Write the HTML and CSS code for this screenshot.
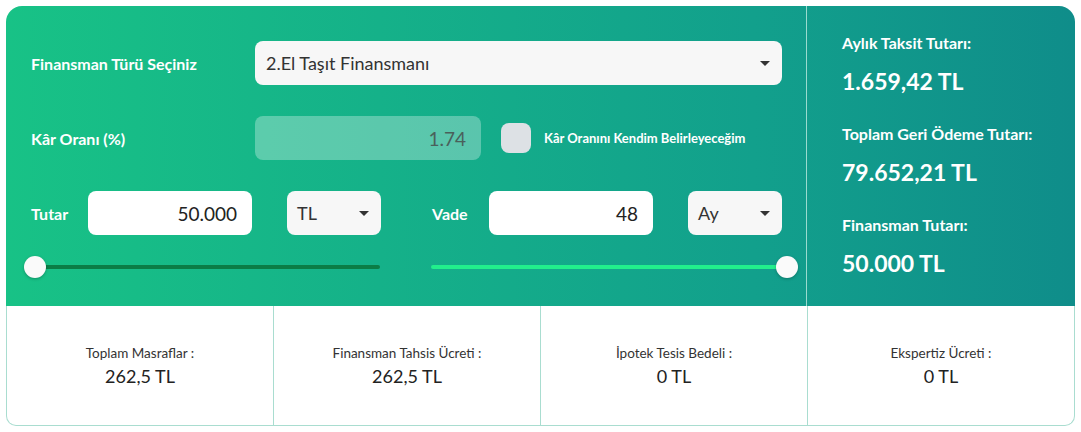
FILE: index.html
```html
<!DOCTYPE html>
<html lang="tr">
<head>
<meta charset="utf-8">
<title>Finansman Hesaplama</title>
<link rel="stylesheet" href="styles.css">
</head>
<body>
<div class="card">
  <div class="top">
    <div class="form">
      <div class="row">
        <div class="label wide">Finansman Türü Seçiniz</div>
        <div class="select big">
          <span>2.El Taşıt Finansmanı</span>
          <span class="caret"></span>
        </div>
      </div>
      <div class="row">
        <div class="label wide">Kâr Oranı (%)</div>
        <div class="input disabled">1.74</div>
        <div class="check"></div>
        <div class="check-label">Kâr Oranını Kendim Belirleyeceğim</div>
      </div>
      <div class="row halves">
        <div class="half">
          <div class="label short">Tutar</div>
          <div class="input white">50.000</div>
          <div class="select small"><span>TL</span><span class="caret"></span></div>
        </div>
        <div class="half">
          <div class="label short">Vade</div>
          <div class="input white">48</div>
          <div class="select small"><span>Ay</span><span class="caret"></span></div>
        </div>
      </div>
      <div class="sliders">
        <div class="slider left">
          <div class="track dark"></div>
          <div class="thumb start"></div>
        </div>
        <div class="slider right">
          <div class="track bright"></div>
          <div class="thumb end"></div>
        </div>
      </div>
    </div>
    <div class="results">
      <div class="r-label">Aylık Taksit Tutarı:</div>
      <div class="r-value">1.659,42 TL</div>
      <div class="r-label">Toplam Geri Ödeme Tutarı:</div>
      <div class="r-value">79.652,21 TL</div>
      <div class="r-label">Finansman Tutarı:</div>
      <div class="r-value">50.000 TL</div>
    </div>
  </div>
  <div class="bottom">
    <div class="cell"><div class="c-label">Toplam Masraflar :</div><div class="c-value">262,5 TL</div></div>
    <div class="cell"><div class="c-label">Finansman Tahsis Ücreti :</div><div class="c-value">262,5 TL</div></div>
    <div class="cell"><div class="c-label">İpotek Tesis Bedeli :</div><div class="c-value">0 TL</div></div>
    <div class="cell"><div class="c-label">Ekspertiz Ücreti :</div><div class="c-value">0 TL</div></div>
  </div>
</div>
</body>
</html>
```
FILE: styles.css
```css
* { box-sizing: border-box; }
html, body { margin: 0; background: #fff; }
body {
  padding: 6px;
  font-family: Lato, "Open Sans", sans-serif;
  color: #333;
}
.card {
  width: 1069px;
  display: flex;
  flex-direction: column;
}
.top {
  display: flex;
  height: 300px;
  border-radius: 16px 16px 0 0;
  background: linear-gradient(to right, #18c286 0%, #12a08c 70%, #0f8d8a 100%);
  color: #fff;
}
.form {
  width: 800px;
  padding: 35px 24px 0 25px;
  display: flex;
  flex-direction: column;
}
.row {
  display: flex;
  align-items: center;
  height: 44px;
  margin-bottom: 31px;
}
.label {
  font-weight: 700;
  font-size: 16px;
  color: #fff;
}
.label.wide { width: 224px; flex: none; }
.label.short { width: 57px; flex: none; }
.select {
  display: flex;
  align-items: center;
  justify-content: space-between;
  height: 44px;
  background: #f7f7f7;
  border-radius: 8px;
  color: #333;
}
.select.big {
  flex: 1;
  padding: 0 12px 0 11px;
  font-size: 18px;
}
.select.small {
  width: 94px;
  margin-left: auto;
  padding: 0 12px 0 10px;
  font-size: 18px;
}
.caret {
  width: 0;
  height: 0;
  border-left: 5px solid transparent;
  border-right: 5px solid transparent;
  border-top: 5px solid #333;
}
.input {
  height: 44px;
  border-radius: 8px;
  display: flex;
  align-items: center;
  justify-content: flex-end;
  padding-right: 15px;
  font-size: 19px;
}
.input.disabled {
  width: 226px;
  background: rgba(255, 255, 255, 0.3);
  color: #4a605b;
}
.input.white {
  width: 164px;
  background: #fff;
  color: #222;
}
.check {
  width: 30px;
  height: 30px;
  margin-left: 20px;
  border-radius: 8px;
  background: #dde1e5;
}
.check-label {
  margin-left: 13px;
  font-size: 13px;
  font-weight: 700;
  color: #fff;
}
.halves { gap: 51px; margin-bottom: 21px; }
.half {
  flex: 1;
  display: flex;
  align-items: center;
}
.sliders {
  display: flex;
  gap: 51px;
  height: 22px;
}
.slider {
  position: relative;
  display: flex;
  align-items: center;
}
.slider.left { flex: none; width: 349px; padding-left: 4px; }
.slider.right { flex: 1; margin-right: -5px; }
.track {
  flex: 1;
  height: 4px;
  border-radius: 2px;
}
.track.dark { background: #0b7d46; }
.track.bright { background: #22ef8c; }
.thumb {
  position: absolute;
  top: 0;
  width: 22px;
  height: 22px;
  border-radius: 50%;
  background: #fafafa;
  box-shadow: 0 1px 3px rgba(0, 0, 0, 0.25);
}
.thumb.start { left: -7px; }
.thumb.end { right: -11px; }
.results {
  flex: 1;
  border-left: 1px solid rgba(200, 240, 230, 0.75);
  padding: 27px 0 0 35px;
}
.r-label {
  font-size: 16px;
  font-weight: 700;
  line-height: 20px;
  margin-bottom: 15px;
}
.r-value {
  font-size: 23px;
  font-weight: 700;
  line-height: 26px;
  margin-bottom: 30px;
}
.bottom {
  display: flex;
  height: 120px;
  border: 1px solid #a9ddd0;
  border-top: none;
  border-radius: 0 0 10px 10px;
}
.cell {
  flex: 1;
  display: flex;
  flex-direction: column;
  align-items: center;
  justify-content: center;
  border-left: 1px solid #a9ddd0;
}
.cell:first-child { border-left: none; }
.c-label {
  font-size: 13.5px;
  line-height: 20px;
  color: #333;
}
.c-value {
  font-size: 18px;
  line-height: 26px;
  color: #222;
}
```
